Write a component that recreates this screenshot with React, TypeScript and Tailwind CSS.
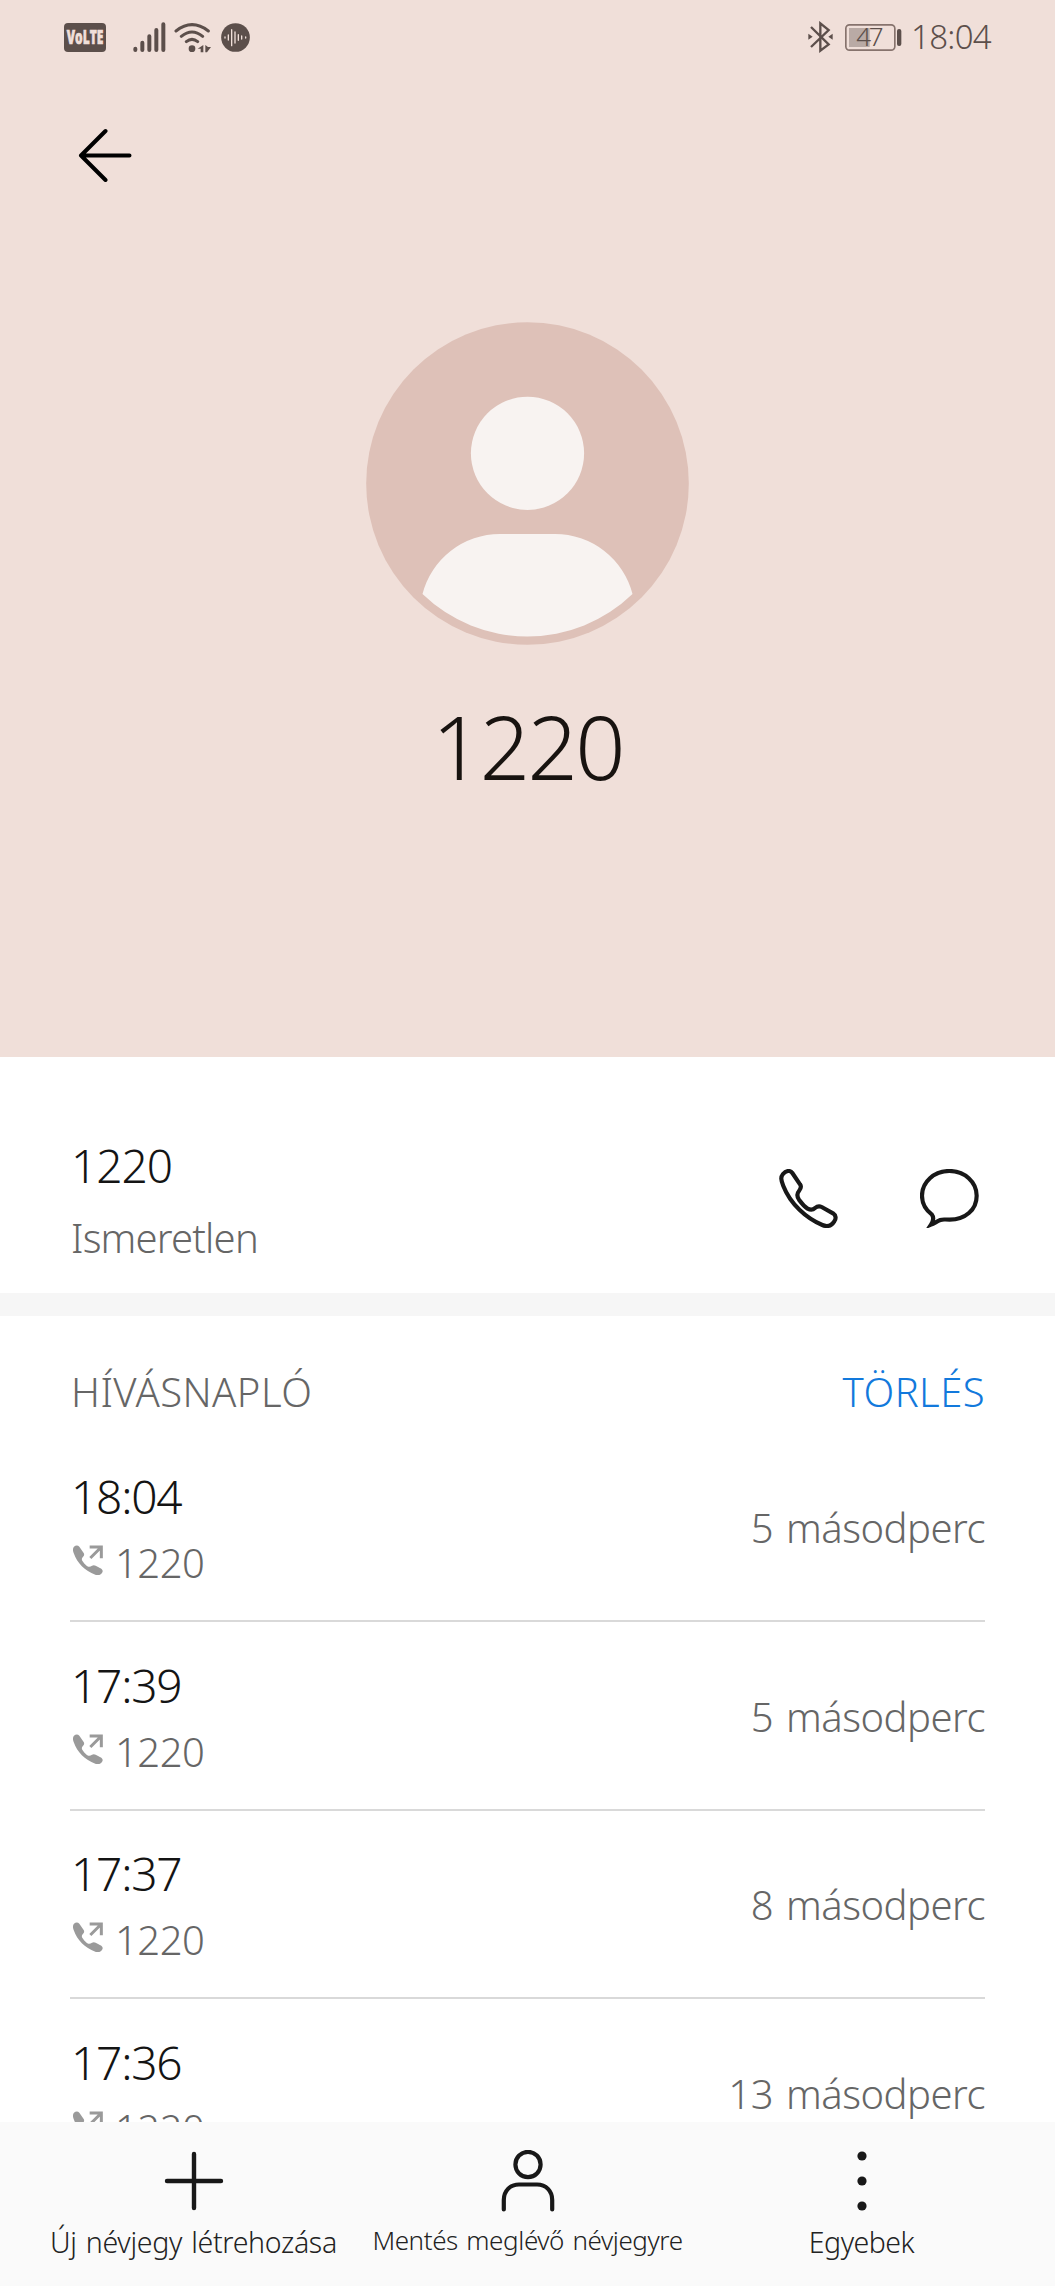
const INK = '#5c4f4b'

const CALLS = [
  { time: '18:04', number: '1220', duration: '5 másodperc' },
  { time: '17:39', number: '1220', duration: '5 másodperc' },
  { time: '17:37', number: '1220', duration: '8 másodperc' },
  { time: '17:36', number: '1220', duration: '13 másodperc' },
]

function VolteIcon() {
  return (
    <svg className="h-[29px] w-[42px] overflow-visible" viewBox="0 0 126 87">
      <rect width="126" height="87" rx="12" fill={INK} />
      <text
        x="8"
        y="64"
        fontSize="58"
        fontWeight="800"
        fill="#f0dfd9"
        stroke="#f0dfd9"
        strokeWidth="2"
        textLength="110"
        lengthAdjust="spacingAndGlyphs"
        className="font-['Open_Sans',sans-serif]"
      >
        VoLTE
      </text>
    </svg>
  )
}

function SignalIcon() {
  return (
    <svg className="h-[31px] w-[33px]" viewBox="0 0 99 93" stroke={INK} strokeWidth="12" strokeLinecap="round">
      <path d="M7 80v4M28 62v22M49 43v41M70 24v60M91 7v77" />
    </svg>
  )
}

function WifiIcon() {
  return (
    <svg className="h-[31px] w-[37px]" viewBox="0 0 111 93" fill="none" stroke={INK} strokeWidth="9" strokeLinecap="round">
      <path d="M6 27Q54-11 103 27M22 43Q54 17 86 43M37 59Q54 45 71 59" />
      <circle cx="54" cy="80" r="10" fill={INK} stroke="none" />
      <path d="M88 69v22h-8v-11h-9zM94 69v22h5l12-16h-9z" fill={INK} stroke="none" />
    </svg>
  )
}

function VoiceIcon() {
  return (
    <svg className="h-[29px] w-[29px]" viewBox="0 0 87 87" strokeLinecap="round">
      <circle cx="43.5" cy="43.5" r="43" fill={INK} />
      <path d="M12 42v3M22 36v15M32 20v48M42 27v33M52 35v17M62 39v9M74 42v3" stroke="#f0dfd9" strokeWidth="4" />
    </svg>
  )
}

function BluetoothIcon() {
  return (
    <svg className="h-[32px] w-[25px]" viewBox="0 0 75 96" fill="none" stroke={INK} strokeWidth="7">
      <path d="M9 18L62 70L37 89V7L62 27L9 78" />
      <path d="M1 38l13 9l-13 9zM74 38l-13 9l13 9z" fill={INK} stroke="none" />
    </svg>
  )
}

function BatteryIcon() {
  return (
    <svg className="h-[27px] w-[57px] overflow-visible" viewBox="0 0 171 81">
      <rect x="2.5" y="2.5" width="147" height="76" rx="11" fill="none" stroke="#86736d" strokeWidth="5" />
      <rect x="12" y="12" width="62" height="57" fill="#b9aaa5" />
      <rect x="156" y="15" width="13" height="51" rx="6" fill={INK} />
      <text x="34" y="67" fontSize="78" fontWeight="300" fill={INK} textLength="82" className="font-['Noto_Sans',sans-serif]">
        47
      </text>
    </svg>
  )
}

function BackIcon() {
  return (
    <svg className="h-[54px] w-[54px]" viewBox="0 0 54 54" fill="none" stroke="#000" strokeWidth="4" strokeLinecap="round" strokeLinejoin="round">
      <path d="M27.5 3L3 27.5L27.5 52M3 27.5H51.5" />
    </svg>
  )
}

function Avatar() {
  return (
    <svg className="h-[323px] w-[323px]" viewBox="0 0 323 323" fill="#f8f3f1">
      <circle cx="161.5" cy="161.5" r="161.3" fill="#dec1b8" />
      <circle cx="161.5" cy="131.3" r="56.6" />
      <path d="M56.5 272A80 80 0 0 1 134 212H189A80 80 0 0 1 266.5 272A151 151 0 0 1 56.5 272Z" />
    </svg>
  )
}

function PhoneIcon() {
  return (
    <svg className="h-[59px] w-[59px]" viewBox="118 117 177 177" fill="none" stroke="#181818" strokeWidth="12.5" strokeLinejoin="round">
      <path d="M130 132C139 121 152 120 158 129L181 163C186 170 183 177 178 183C172 190 172 200 178 209C186 220 195 230 204 236C211 240 220 240 226 234C232 229 240 228 246 231L280 250C289 256 290 266 284 274C275 288 262 291 248 285C200 265 152 222 131 168C123 148 123 141 130 132Z" />
    </svg>
  )
}

function MessageIcon() {
  return (
    <svg className="h-[59px] w-[59px]" viewBox="541 117 177 177" fill="none" stroke="#181818" strokeWidth="12.5">
      <path d="M574 284C582 272 583 262 576 253C556 238 547 220 547 197C547 156 583 123 629 123C675 123 711 156 711 197C711 240 676 269 630 269C615 269 610 267 602 270C592 274 584 280 574 284Z" />
    </svg>
  )
}

function OutgoingIcon() {
  return (
    <svg className="h-[30px] w-[30px]" viewBox="69 617 90 90" fill="#9a9a9a">
      <path d="M72 622C77 617 84 617 88 622L101 641C104 646 102 650 98 654C94 659 95 662 99 667C104 674 109 679 115 682C119 683 122 682 126 679C130 677 133 677 137 679L154 688C159 692 159 696 156 701C151 708 144 709 136 706C104 694 82 672 71 641C68 633 68 627 72 622Z" />
      <path d="M119 623H154V657M154 623L121 656" fill="none" stroke="#9a9a9a" strokeWidth="9" />
    </svg>
  )
}

function PlusIcon() {
  return (
    <svg className="h-[62px] w-[62px]" viewBox="0 0 62 62" stroke="#181818" strokeWidth="4.4" strokeLinecap="round">
      <path d="M31 4V58M4 31H58" />
    </svg>
  )
}

function PersonIcon() {
  return (
    <svg className="h-[62px] w-[62px]" viewBox="0 0 62 62" fill="none" stroke="#181818" strokeWidth="4.2" strokeLinecap="round">
      <circle cx="31" cy="14.5" r="12.6" />
      <path d="M6.8 59.5V50C6.8 41 13 34.5 22 34.5H40C49 34.5 55.2 41 55.2 50V59.5" />
    </svg>
  )
}

function MoreIcon() {
  return (
    <svg className="h-[62px] w-[62px]" viewBox="0 0 62 62" fill="#181818">
      <circle cx="31" cy="6" r="4.6" />
      <circle cx="31" cy="31" r="4.6" />
      <circle cx="31" cy="56" r="4.6" />
    </svg>
  )
}

function StatusBar() {
  return (
    <div className="flex h-[74px] items-center px-16">
      <VolteIcon />
      <div className="ml-[27px] mr-[8px]"><SignalIcon /></div>
      <WifiIcon />
      <div className="ml-[10px]"><VoiceIcon /></div>
      <div className="ml-auto mr-[12px]"><BluetoothIcon /></div>
      <BatteryIcon />
      <span className="ml-[9px] text-[33px] leading-[48px] tracking-[-0.7px] text-[#5c4f4b]">18:04</span>
    </div>
  )
}

function CallRow({ time, number, duration }: (typeof CALLS)[number]) {
  return (
    <div className="flex h-[188.5px] shrink-0 justify-between border-b-2 border-[#d9d9d9] pt-[32.5px]">
      <div className="pl-px">
        <div className="text-[46px] leading-[60px] tracking-[-1.2px] text-[#141414]">{time}</div>
        <div className="mt-[10px] flex">
          <div className="ml-[2px] mt-[9px]"><OutgoingIcon /></div>
          <span className="ml-[12px] mt-px text-[40px] leading-[52px] tracking-[-0.5px] text-[#666]">{number}</span>
        </div>
      </div>
      <span className="mt-[36px] text-[40px] leading-[52px] tracking-[-0.5px] [word-spacing:3px] text-[#666]">{duration}</span>
    </div>
  )
}

export default function App() {
  return (
    <div className="flex h-[2286px] w-[1055px] flex-col overflow-hidden bg-white font-['Noto_Sans',sans-serif] font-light">
      <header className="flex h-[1057px] shrink-0 flex-col bg-[#f0dfd9]">
        <StatusBar />
        <button type="button" className="ml-[78px] mt-[54px] w-[54px]"><BackIcon /></button>
        <div className="mt-[140px] flex flex-col items-center">
          <Avatar />
          <h1 className="mt-[41px] text-[88px] leading-[120px] tracking-[-2.5px] text-[#181310]">1220</h1>
        </div>
      </header>

      <section className="flex h-[236px] shrink-0 justify-between pl-[71px] pr-[76px] pt-[78px]">
        <div>
          <div className="text-[46px] leading-[60px] tracking-[-1px] text-[#141414]">1220</div>
          <div className="mt-[17px] text-[40px] leading-[52px] tracking-[-0.8px] text-[#666]">Ismeretlen</div>
        </div>
        <div className="mt-[34px] flex gap-[82px]">
          <button type="button" className="h-[59px]"><PhoneIcon /></button>
          <button type="button" className="h-[59px]"><MessageIcon /></button>
        </div>
      </section>

      <div className="h-[23px] shrink-0 bg-[#f6f6f6]" />

      <section className="flex h-[806px] shrink-0 flex-col overflow-hidden px-[70px]">
        <div className="flex h-[117.5px] shrink-0 justify-between pl-px pt-[50px] text-[40px] leading-[52px] tracking-[0.45px]">
          <h2 className="text-[#666]">HÍVÁSNAPLÓ</h2>
          <button type="button" className="h-[52px] text-[#1279dc]">TÖRLÉS</button>
        </div>
        {CALLS.map(call => (
          <CallRow key={call.time} {...call} />
        ))}
      </section>

      <nav className="grid h-[164px] shrink-0 grid-cols-3 bg-[#fafafa] px-[26.5px] text-[#222]">
        <button type="button" className="flex flex-col items-center pt-[28px]">
          <PlusIcon />
          <span className="mt-[10px] whitespace-nowrap text-[28.5px] leading-[40px] tracking-[-0.3px] [word-spacing:2px]">Új névjegy létrehozása</span>
        </button>
        <button type="button" className="flex flex-col items-center pt-[28px]">
          <PersonIcon />
          <span className="mt-[8px] whitespace-nowrap text-[26px] leading-[40px] tracking-[-0.4px] [word-spacing:2px]">Mentés meglévő névjegyre</span>
        </button>
        <button type="button" className="flex flex-col items-center pt-[28px]">
          <MoreIcon />
          <span className="mt-[10px] whitespace-nowrap text-[28.5px] leading-[40px] tracking-[-0.5px]">Egyebek</span>
        </button>
      </nav>
    </div>
  )
}
